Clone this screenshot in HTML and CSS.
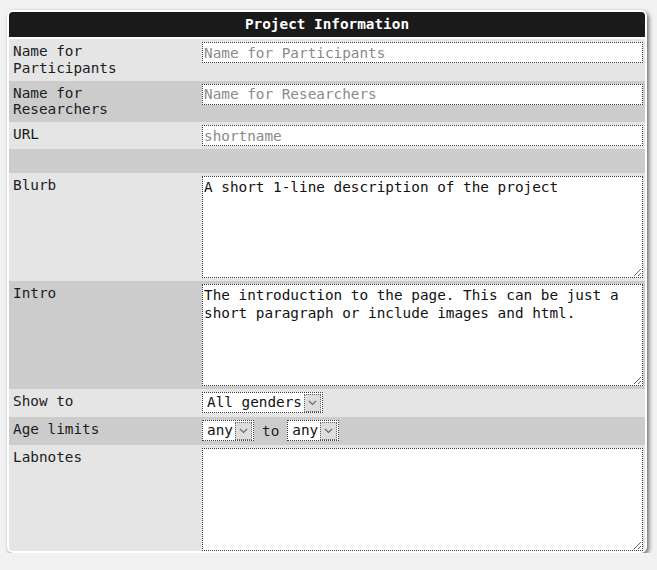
FILE: index.html
```html
<!DOCTYPE html>
<html>
<head>
<meta charset="utf-8">
<title>Project Information</title>
<link rel="stylesheet" href="styles.css">
</head>
<body>
<div class="panel">
  <div class="head">Project Information</div>
  <div class="row light">
    <div class="label">Name for Participants</div>
    <div class="field"><input class="text" type="text" placeholder="Name for Participants"></div>
  </div>
  <div class="row dark">
    <div class="label">Name for Researchers</div>
    <div class="field"><input class="text" type="text" placeholder="Name for Researchers"></div>
  </div>
  <div class="row light">
    <div class="label">URL</div>
    <div class="field"><input class="text" type="text" placeholder="shortname"></div>
  </div>
  <div class="row dark spacer"></div>
  <div class="row light">
    <div class="label">Blurb</div>
    <div class="field"><textarea class="area">A short 1-line description of the project</textarea></div>
  </div>
  <div class="row dark">
    <div class="label">Intro</div>
    <div class="field"><textarea class="area">The introduction to the page. This can be just a short paragraph or include images and html.</textarea></div>
  </div>
  <div class="row light">
    <div class="label">Show to</div>
    <div class="field sels">
      <span class="sel"><select><option>All genders</option><option>Female</option><option>Male</option></select><span class="arrow"><svg width="9" height="6" viewBox="0 0 9 6"><path d="M1 1 L4.5 4.5 L8 1" fill="none" stroke="#666" stroke-width="1.1"/></svg></span></span>
    </div>
  </div>
  <div class="row dark">
    <div class="label">Age limits</div>
    <div class="field sels">
      <span class="sel"><select><option>any</option><option>18</option><option>21</option></select><span class="arrow"><svg width="9" height="6" viewBox="0 0 9 6"><path d="M1 1 L4.5 4.5 L8 1" fill="none" stroke="#666" stroke-width="1.1"/></svg></span></span>
      <span class="to">to</span>
      <span class="sel"><select><option>any</option><option>30</option><option>65</option></select><span class="arrow"><svg width="9" height="6" viewBox="0 0 9 6"><path d="M1 1 L4.5 4.5 L8 1" fill="none" stroke="#666" stroke-width="1.1"/></svg></span></span>
    </div>
  </div>
  <div class="row light last">
    <div class="label">Labnotes</div>
    <div class="field"><textarea class="area tall"></textarea></div>
  </div>
</div>
</body>
</html>
```

FILE: styles.css
```css
html, body {
  margin: 0;
  padding: 0;
  background: #f2f2f2;
}
body {
  font-family: "DejaVu Sans Mono", "Liberation Mono", monospace;
  font-size: 14.35px;
  color: #1c1c1c;
}
.panel {
  margin: 10px 0 0 7px;
  width: 636px;
  border: 2px solid #ffffff;
  border-radius: 6px;
  overflow: hidden;
  background: #e5e5e5;
  box-shadow: 2px 2px 4px rgba(0, 0, 0, 0.55);
}
.head {
  background: #1a1a1a;
  color: #ffffff;
  font-weight: bold;
  text-align: center;
  line-height: 17px;
  padding: 4px 0 4px;
  border-bottom: 2px solid #ffffff;
}
.row {
  display: grid;
  grid-template-columns: 192px 1fr;
}
.light { background: #e5e5e5; }
.dark { background: #cccccc; }
.spacer { height: 24px; }
.label {
  padding: 4px 24px 4px 4px;
  line-height: 16.8px;
}
.field {
  padding: 3px 3px 3px 1px;
}
.text {
  display: block;
  box-sizing: border-box;
  width: 441px;
  height: 21px;
  margin: 0;
  padding: 0 1px;
  border: 1px dotted #3a3a3a;
  background: #ffffff;
  font: inherit;
  color: #1c1c1c;
  outline: none;
}
.text::placeholder {
  color: #8a8a8a;
}
.area {
  display: block;
  box-sizing: border-box;
  width: 441px;
  height: 102px;
  margin: 0;
  padding: 1px 1px;
  border: 1px dotted #3a3a3a;
  background: #ffffff;
  font: inherit;
  line-height: 18px;
  color: #111111;
  outline: none;
}
.area.tall {
  height: 103px;
}
.last .field {
  padding-bottom: 0;
}
.sels {
  display: flex;
  align-items: center;
  gap: 8px;
  padding-bottom: 4px;
}
.sel {
  display: inline-flex;
  align-items: center;
  box-sizing: border-box;
  height: 21px;
  padding: 0 1px 0 4px;
  border: 1px dotted #3a3a3a;
  background: #ffffff;
}
.sel select {
  appearance: none;
  -webkit-appearance: none;
  border: none;
  background: transparent;
  font: inherit;
  color: #111111;
  padding: 0;
  margin: 0;
  outline: none;
  line-height: 17px;
}
.arrow {
  display: flex;
  align-items: center;
  justify-content: center;
  box-sizing: border-box;
  width: 17px;
  height: 18px;
  margin-left: 2px;
  background: #dddddd;
  border: 1px dotted #666666;
}
.to {
  padding: 0;
}
```
